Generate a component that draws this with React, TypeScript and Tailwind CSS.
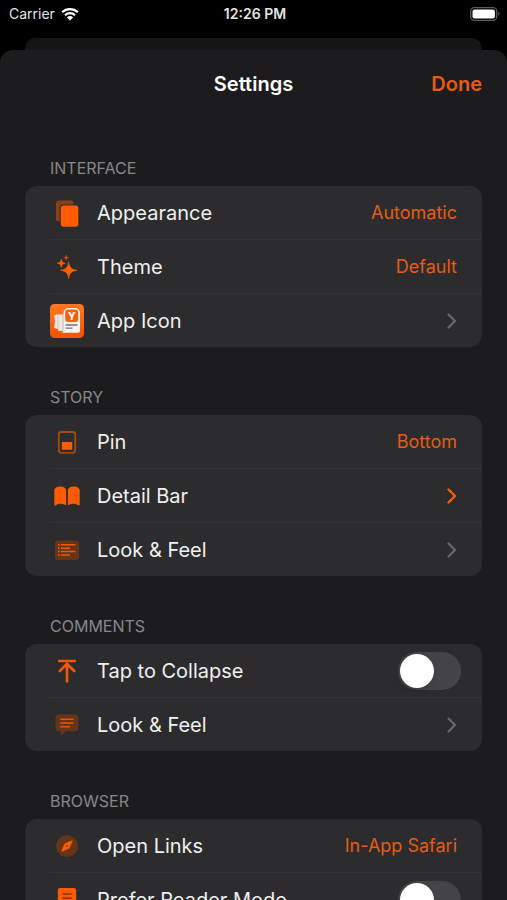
import { useState } from 'react'
import type { ReactNode } from 'react'

const ORANGE = '#ff5c00'
const DIM_ORANGE = '#653419'

interface IconProps {
  children: ReactNode
}

function Icon({ children }: IconProps) {
  return (
    <svg viewBox="0 0 34 34" className="h-[34px] w-[34px] shrink-0" fill="none" aria-hidden="true">
      {children}
    </svg>
  )
}

const AppearanceIcon = () => (
  <Icon>
    <rect x="6" y="4.5" width="17.5" height="21" rx="3" fill="#8a3f14" />
    <rect x="9.6" y="8.4" width="19.8" height="23.6" rx="3.6" fill="#2c2c2e" />
    <rect x="10.8" y="9.5" width="17.5" height="21.3" rx="2.8" fill={ORANGE} />
  </Icon>
)

const ThemeIcon = () => (
  <Icon>
    <path
      d="M18.7 11.9c.9 5.6 2.7 7.4 8.3 8.3-5.6.9-7.4 2.7-8.3 8.3-.9-5.6-2.7-7.4-8.3-8.3 5.6-.9 7.4-2.7 8.3-8.3z"
      fill={ORANGE}
      stroke={ORANGE}
      strokeWidth="0.6"
      strokeLinejoin="round"
    />
    <path
      d="M11.3 9c.5 2.8 1.4 3.7 4.2 4.2-2.8.5-3.7 1.400-4.2 4.2-.5-2.8-1.400-3.700-4.2-4.2 2.8-.5 3.700-1.400 4.2-4.2z"
      fill={ORANGE}
      stroke={ORANGE}
      strokeWidth="0.5"
    />
    <path
      d="M16.200 5.200c.3 1.600.8 2.100 2.400 2.400-1.600.3-2.100.8-2.400 2.400-.3-1.600-.8-2.100-2.400-2.400 1.600-.3 2.100-.8 2.400-2.400z"
      fill="#d9540f"
      stroke="#d9540f"
      strokeWidth="0.5"
    />
  </Icon>
)

const AppIcon = () => (
  <Icon>
    <defs>
      <linearGradient id="app-bg" x1="0" y1="0" x2="0" y2="1">
        <stop offset="0" stopColor="#ff7a22" />
        <stop offset="1" stopColor="#ee5306" />
      </linearGradient>
    </defs>
    <rect width="34" height="34" rx="4.5" fill="url(#app-bg)" />
    <path d="M4 11.5 7 10.500h6.500v16.500H8.300v-2L4 24c1.200-3 1.200-9.500 0-12.500z" fill="#ece7e4" />
    <path d="M8 11v14" stroke="#c4bbb6" strokeWidth="0.7" />
    <path d="M13 11v15.500" stroke="#b5aca8" strokeWidth="0.7" />
    <path d="M13.500 9a5 5 0 0 1 5-5H25a5 5 0 0 1 5 5v17.500a2.300 2.300 0 0 1-2.300 2.300H10.500c2 0 3-1.200 3-3z" fill="#f7f5f4" />
    <rect x="15.200" y="5.600" width="13" height="12.400" rx="3" fill="#fa5f10" />
    <text x="21.700" y="15.500" textAnchor="middle" fontSize="10" fontWeight="800" fill="#fff" fontFamily="Inter, sans-serif">
      Y
    </text>
    <path d="M15.500 21h12M15.500 24.200h7" stroke="#77706d" strokeWidth="1.300" />
  </Icon>
)

const PinIcon = () => (
  <Icon>
    <rect x="8.800" y="7" width="16.400" height="20.800" rx="2.500" stroke="#a3480f" strokeWidth="1.800" />
    <rect x="11.800" y="17" width="10.400" height="7.800" rx="0.600" fill={ORANGE} />
  </Icon>
)

const BookIcon = () => (
  <Icon>
    <path
      d="M4.300 11.500C4.300 9 7 7.400 10.200 7.400c2.800 0 5 1.200 5.900 3v16.200c-1.600-1.300-3.600-1.800-5.600-1.800-2.200 0-3.600.6-4.700 1.500-.8.6-1.500.2-1.500-.7z"
      fill={ORANGE}
    />
    <path
      d="M29.700 11.500c0-2.500-2.700-4.100-5.900-4.100-2.800 0-5 1.200-5.900 3v16.200c1.600-1.300 3.600-1.800 5.600-1.800 2.200 0 3.600.6 4.700 1.500.8.6 1.500.2 1.500-.7z"
      fill={ORANGE}
    />
  </Icon>
)

const ListIcon = () => (
  <Icon>
    <rect x="5" y="7.500" width="24" height="19.500" rx="2.500" fill={DIM_ORANGE} />
    <path d="M8 11.800h1.600M8 15.200h1.600M8 18.600h1.600M8 22h1.600" stroke={ORANGE} strokeWidth="1.500" />
    <path d="M11 11.800h14.500M11 15.200h9M11 18.600h14.500M11 22h9" stroke="#f05a06" strokeWidth="1.500" />
  </Icon>
)

const CollapseIcon = () => (
  <Icon>
    <path d="M9.200 7h15.600M17 10v17.500M9.800 17 17 9.800l7.200 7.200" stroke="#f05a06" strokeWidth="2.600" strokeLinecap="round" />
  </Icon>
)

const CommentIcon = () => (
  <Icon>
    <path
      d="M8.600 6.500h16.800a3 3 0 0 1 3 3v10.700a3 3 0 0 1-3 3H16l-4 3.700c-.6.500-1.200.2-1.200-.5v-3.200H8.600a3 3 0 0 1-3-3V9.500a3 3 0 0 1 3-3z"
      fill={DIM_ORANGE}
    />
    <path d="M10.800 11.300h12.200M10.800 15h12.200M10.800 18.700h8.600" stroke="#e85608" strokeWidth="1.600" strokeLinecap="round" />
  </Icon>
)

const CompassIcon = () => (
  <Icon>
    <circle cx="17" cy="17" r="10.800" fill={DIM_ORANGE} />
    <path d="M22.300 11.700 19.200 19.200l-7.500 3.100 3.100-7.500z" fill={ORANGE} stroke={ORANGE} strokeWidth="0.800" strokeLinejoin="round" />
    <circle cx="17" cy="17" r="1.100" fill="#8a3f14" />
  </Icon>
)

const ReaderIcon = () => (
  <Icon>
    <rect x="7.800" y="5" width="18.400" height="24" rx="2.500" fill={ORANGE} />
    <path d="M12.300 11h9.400M12.300 15.200h9.400M12.300 19.400h6" stroke="#7a3512" strokeWidth="1.500" />
  </Icon>
)

function Chevron({ active }: { active?: boolean }) {
  return (
    <svg viewBox="0 0 10 16" className="h-4 w-[10px]" fill="none" aria-hidden="true">
      <path
        d="m1.500 1.500 6.500 6.500-6.500 6.500"
        stroke={active ? '#f3600c' : '#68686b'}
        strokeWidth={active ? 2.4 : 2.2}
        strokeLinecap="round"
        strokeLinejoin="round"
      />
    </svg>
  )
}

const rowClass =
  'box-content flex h-[53px] items-center gap-[13px] pr-[25px] ml-[25px] border-b border-[#343437] last:border-b-0 text-[20px] leading-6 text-[#f0f0f0]'

interface PickerRowProps {
  id: string
  icon: ReactNode
  label: string
  value: string
}

function PickerRow({ id, icon, label, value }: PickerRowProps) {
  return (
    <div className={rowClass}>
      {icon}
      <label htmlFor={id} className="grow">
        {label}
      </label>
      <select
        id={id}
        defaultValue={value}
        className="appearance-none bg-transparent text-right text-[18px] leading-6 text-[#e65c12] outline-none [field-sizing:content]"
      >
        <option>{value}</option>
      </select>
    </div>
  )
}

interface LinkRowProps {
  href: string
  icon: ReactNode
  label: string
  active?: boolean
}

function LinkRow({ href, icon, label, active }: LinkRowProps) {
  return (
    <a href={href} className={rowClass}>
      {icon}
      <span className="grow">{label}</span>
      <Chevron active={active} />
    </a>
  )
}

interface SwitchRowProps {
  id: string
  icon: ReactNode
  label: string
}

function SwitchRow({ id, icon, label }: SwitchRowProps) {
  const [on, setOn] = useState(false)
  return (
    <div className={rowClass}>
      {icon}
      <label htmlFor={id} className="grow">
        {label}
      </label>
      <input
        id={id}
        type="checkbox"
        role="switch"
        checked={on}
        onChange={(e) => setOn(e.target.checked)}
        className="-mr-1 flex h-[38px] w-[63px] shrink-0 appearance-none items-center rounded-full bg-[#444448] px-[2px] before:block before:size-[34px] before:rounded-full before:bg-white before:shadow-md checked:justify-end checked:bg-[#ff5c00]"
      />
    </div>
  )
}

function Section({ title, children }: { title: string; children: ReactNode }) {
  return (
    <section>
      <h2 className="flex h-[68px] items-end pb-2 pl-[25px] text-[16px] leading-5 text-[#87878b]">{title}</h2>
      <div className="rounded-xl bg-[#2c2c2e]">{children}</div>
    </section>
  )
}

function StatusBar() {
  return (
    <div className="grid h-7 shrink-0 grid-cols-3 items-center pl-[9px] pr-[6px] text-[14px] leading-5 text-[#e4e4e4]">
      <div className="flex items-center gap-[6px]">
        <span>Carrier</span>
        <svg viewBox="0 0 18 14" className="h-[14px] w-[18px]" fill="none" aria-hidden="true">
          <path d="M1.200 5.200a11.200 11.200 0 0 1 15.600 0M4 8.200a7.200 7.200 0 0 1 10 0" stroke="#fff" strokeWidth="2.200" />
          <path d="M9 13.500 5.900 10.400a4.400 4.400 0 0 1 6.200 0z" fill="#fff" />
        </svg>
      </div>
      <span className="text-center font-semibold">12:26 PM</span>
      <svg viewBox="0 0 31 14" className="h-[14px] w-[31px] justify-self-end" fill="none" aria-hidden="true">
        <rect x="0.700" y="0.700" width="26" height="12.600" rx="3.500" stroke="#5c5c5c" strokeWidth="1.300" />
        <rect x="2.500" y="2.500" width="22.400" height="9" rx="2" fill="#fff" />
        <path d="M28.300 4.800c1.600.6 1.600 3.800 0 4.400z" fill="#5c5c5c" />
      </svg>
    </div>
  )
}

export default function App() {
  return (
    <div className="flex h-screen flex-col overflow-hidden bg-black font-['Inter','Liberation_Sans',sans-serif]">
      <StatusBar />
      <div className="mx-[25px] mt-[10px] h-3 shrink-0 rounded-t-[10px] bg-[#151515]" />
      <main className="min-h-0 grow overflow-y-auto rounded-t-[13px] bg-[#1c1c1e] px-[25px] [scrollbar-width:none]">
        <header className="grid h-[68px] grid-cols-3 items-center text-[20px] leading-6 font-semibold">
          <h1 className="col-start-2 text-center text-white">Settings</h1>
          <button type="button" className="justify-self-end text-[#e65c12]">
            Done
          </button>
        </header>

        <Section title="INTERFACE">
          <PickerRow id="appearance" icon={<AppearanceIcon />} label="Appearance" value="Automatic" />
          <PickerRow id="theme" icon={<ThemeIcon />} label="Theme" value="Default" />
          <LinkRow href="#app-icon" icon={<AppIcon />} label="App Icon" />
        </Section>

        <Section title="STORY">
          <PickerRow id="pin" icon={<PinIcon />} label="Pin" value="Bottom" />
          <LinkRow href="#detail-bar" icon={<BookIcon />} label="Detail Bar" active />
          <LinkRow href="#story-look" icon={<ListIcon />} label="Look & Feel" />
        </Section>

        <Section title="COMMENTS">
          <SwitchRow id="tap-to-collapse" icon={<CollapseIcon />} label="Tap to Collapse" />
          <LinkRow href="#comments-look" icon={<CommentIcon />} label="Look & Feel" />
        </Section>

        <Section title="BROWSER">
          <PickerRow id="open-links" icon={<CompassIcon />} label="Open Links" value="In-App Safari" />
          <SwitchRow id="reader-mode" icon={<ReaderIcon />} label="Prefer Reader Mode" />
        </Section>
      </main>
    </div>
  )
}
